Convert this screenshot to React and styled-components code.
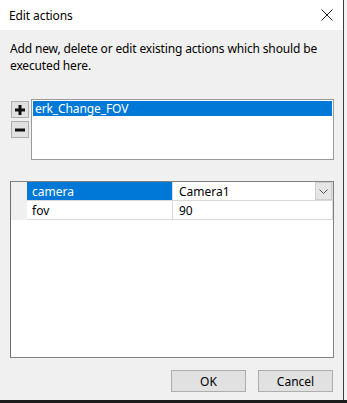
import styled, { createGlobalStyle } from "styled-components";

const GlobalStyle = createGlobalStyle`
  html, body {
    margin: 0;
    padding: 0;
    background: #f3f3f3;
  }
  * {
    box-sizing: border-box;
  }
`;

const Screen = styled.div`
  width: 347px;
  height: 403px;
  display: flex;
  flex-direction: column;
  overflow: hidden;
  font-family: "Noto Sans", "Open Sans", sans-serif;
  font-size: 12px;
  color: #000;
`;

const WindowRow = styled.div`
  flex: 1;
  display: flex;
`;

const Window = styled.div`
  width: 344px;
  display: flex;
  flex-direction: column;
  background: #f0f0f0;
  border-right: 1px solid #3c3c3c;
`;

const BottomEdge = styled.div`
  height: 3px;
  background: #1c1c1c;
`;

const TitleBar = styled.div`
  height: 30px;
  background: #fff;
  display: flex;
  align-items: center;
  justify-content: space-between;
  padding: 0 8px 0 9px;
`;

const Title = styled.span`
  font-size: 12px;
  letter-spacing: -0.1px;
`;

const CloseButton = styled.div`
  width: 14px;
  height: 14px;
  display: flex;
  align-items: center;
  justify-content: center;
  margin-right: 1px;
`;

const Body = styled.div`
  flex: 1;
  display: flex;
  flex-direction: column;
  padding: 10px 9px 0 10px;
`;

const Description = styled.p`
  margin: 0;
  line-height: 17px;
  letter-spacing: -0.15px;
`;

const ListRow = styled.div`
  display: flex;
  gap: 2px;
  margin-top: 25px;
`;

const SideButtons = styled.div`
  display: flex;
  flex-direction: column;
  gap: 3px;
  padding: 2px 0 0 1px;
`;

const SquareButton = styled.div`
  width: 18px;
  height: 17px;
  border: 1px solid #adadad;
  background: #e1e1e1;
  display: flex;
  align-items: center;
  justify-content: center;
`;

const ListBox = styled.div`
  flex: 1;
  height: 61px;
  background: #fff;
  border: 1px solid #9a9a9a;
  padding: 1px;
`;

const ListItem = styled.div`
  height: 15px;
  line-height: 15px;
  padding-left: 2px;
  background: ${(p) => (p.$selected ? "#0078d7" : "transparent")};
  color: ${(p) => (p.$selected ? "#fff" : "#000")};
  letter-spacing: -0.1px;
`;

const GridPanel = styled.div`
  margin-top: 21px;
  height: 177px;
  background: #fff;
  border: 1px solid #828282;
  border-left-color: #6e6e6e;
`;

const GridRow = styled.div`
  display: grid;
  grid-template-columns: 16px 145px 1fr;
  height: 19px;
`;

const Gutter = styled.div`
  background: #f0f0f0;
`;

const Cell = styled.div`
  display: flex;
  align-items: center;
  justify-content: space-between;
  padding-left: ${(p) => (p.$value ? "6px" : "5px")};
  background: ${(p) => (p.$selected ? "#0078d7" : "#fff")};
  color: ${(p) => (p.$selected ? "#fff" : "#000")};
  border-bottom: 1px solid #d9d9d9;
  border-left: ${(p) => (p.$value ? "1px solid #d9d9d9" : "none")};
  border-right: ${(p) => (p.$value ? "1px solid #d9d9d9" : "none")};
`;

const DropButton = styled.div`
  width: 17px;
  height: 100%;
  background: #e5e5e5;
  border: 1px solid #cfcfcf;
  display: flex;
  align-items: center;
  justify-content: center;
`;

const Footer = styled.div`
  display: flex;
  justify-content: flex-end;
  gap: 12px;
  margin-top: 12px;
  padding-right: 1px;
`;

const DialogButton = styled.button`
  width: 75px;
  height: 22px;
  border: 1px solid #adadad;
  background: #e1e1e1;
  font-family: inherit;
  font-size: 12px;
  color: #000;
  padding: 0;
`;

const rows = [
  { name: "camera", value: "Camera1", selected: true, drop: true },
  { name: "fov", value: "90" },
];

const App = () => {
  return (
    <>
      <GlobalStyle />
      <Screen>
        <WindowRow>
          <Window>
            <TitleBar>
              <Title>Edit actions</Title>
              <CloseButton>
                <svg width="12" height="12" viewBox="0 0 12 12">
                  <path d="M0.5 0.5 L11.5 11.5 M11.5 0.5 L0.5 11.5" stroke="#222" strokeWidth="1" />
                </svg>
              </CloseButton>
            </TitleBar>
            <Body>
              <Description>
                Add new, delete or edit existing actions which should be executed here.
              </Description>
              <ListRow>
                <SideButtons>
                  <SquareButton>
                    <svg width="10" height="10" viewBox="0 0 10 10">
                      <path d="M3.5 0 H6.5 V3.5 H10 V6.5 H6.5 V10 H3.5 V6.5 H0 V3.5 H3.5 Z" fill="#111" />
                    </svg>
                  </SquareButton>
                  <SquareButton>
                    <svg width="10" height="10" viewBox="0 0 10 10">
                      <rect x="0" y="3.5" width="10" height="3" fill="#111" />
                    </svg>
                  </SquareButton>
                </SideButtons>
                <ListBox>
                  <ListItem $selected>erk_Change_FOV</ListItem>
                </ListBox>
              </ListRow>
              <GridPanel>
                {rows.map((r) => (
                  <GridRow key={r.name}>
                    <Gutter />
                    <Cell $selected={r.selected}>{r.name}</Cell>
                    <Cell $value>
                      {r.value}
                      {r.drop && (
                        <DropButton>
                          <svg width="9" height="5" viewBox="0 0 9 5">
                            <path d="M0.5 0.5 L4.5 4.5 L8.5 0.5" stroke="#555" strokeWidth="1" fill="none" />
                          </svg>
                        </DropButton>
                      )}
                    </Cell>
                  </GridRow>
                ))}
              </GridPanel>
              <Footer>
                <DialogButton>OK</DialogButton>
                <DialogButton>Cancel</DialogButton>
              </Footer>
            </Body>
          </Window>
        </WindowRow>
        <BottomEdge />
      </Screen>
    </>
  );
};

export default App;
